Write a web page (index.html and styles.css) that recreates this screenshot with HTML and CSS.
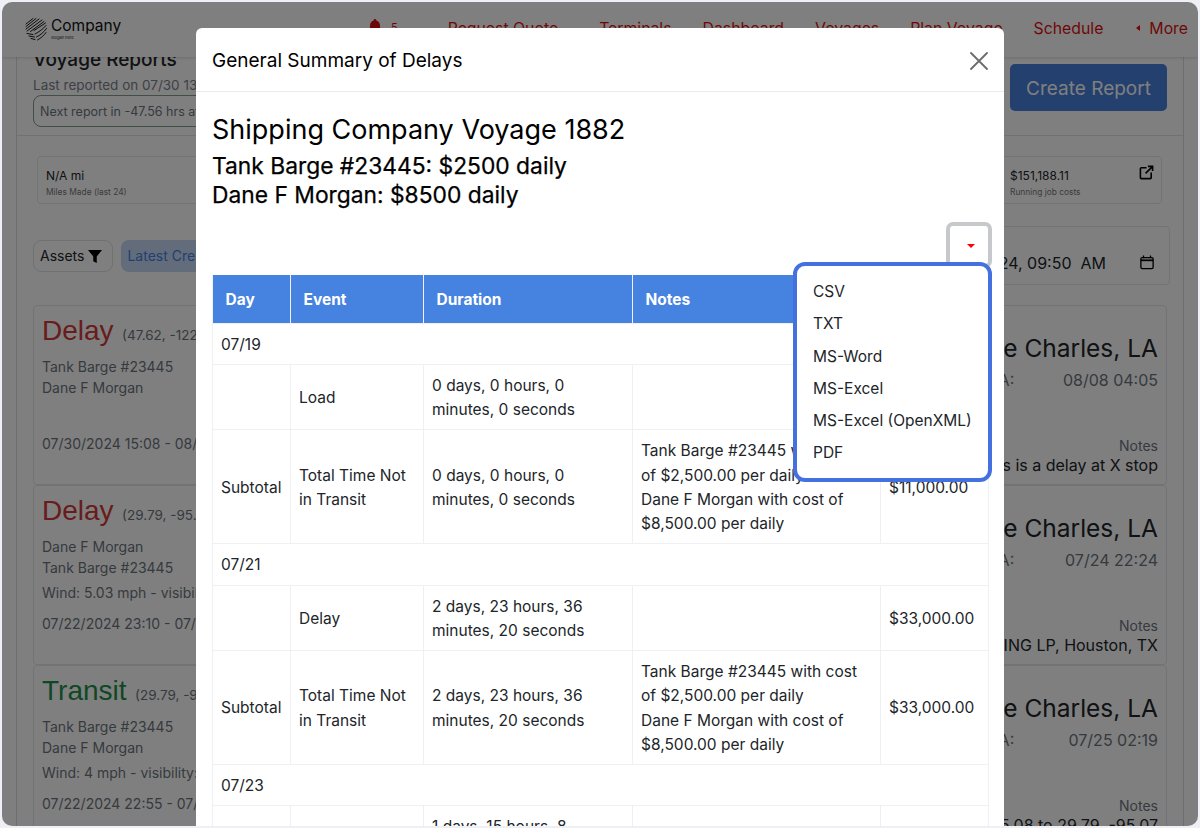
FILE: index.html
```html
<!DOCTYPE html>
<html lang="en">
<head>
<meta charset="utf-8">
<title>General Summary of Delays</title>
<link rel="stylesheet" href="styles.css">
</head>
<body>
<div class="frame">
  <div class="page">
    <div class="head-row">
      <div class="head-left">
        <h2 class="page-title">Voyage Reports</h2>
        <div class="last">Last reported on 07/30 13:42</div>
        <div class="pill">Next report in -47.56 hrs at 07/30 13:42 from last report</div>
      </div>
      <button class="create">Create Report</button>
    </div>
    <div class="stats">
      <div class="stat"><div class="stat-v">N/A mi</div><div class="stat-l">Miles Made (last 24)</div></div>
      <div class="stat stat-r">
        <div><div class="stat-v">$151,188.11</div><div class="stat-l">Running job costs</div></div>
        <svg class="ext" viewBox="0 0 16 16" width="15" height="15" fill="none" stroke="#000" stroke-width="1.700"><path d="M8 3H2.500A1 1 0 0 0 1.500 4v9.500a1 1 0 0 0 1 1H12a1 1 0 0 0 1-1V8"/><path d="M9.500 1.500H14.500V6.500M14.500 1.500L7 9"/></svg>
      </div>
    </div>
    <div class="filters">
      <div class="filter-left">
        <button class="assets">Assets <svg viewBox="0 0 16 16" width="14" height="14"><path d="M0 1h16L10 8.500V16l-4-2V8.500z"/></svg></button>
        <button class="latest">Latest Created</button>
      </div>
      <div class="date">
        <span>07/30/2024, 09:50&nbsp; AM</span>
        <svg viewBox="0 0 16 16" width="14" height="15" fill="none" stroke="#000" stroke-width="1.500"><rect x="1" y="2.500" width="14" height="12.500" rx="1.500"/><path d="M1 5.500h14" stroke-width="2"/><path d="M4 0v3M12 0v3"/></svg>
      </div>
    </div>
    <div class="reports">
      <article class="report">
        <div class="r-left">
          <div class="r-title"><span class="st st-red">Delay</span> <span class="coord">(47.62, -122.35)</span></div>
          <div class="r-line">Tank Barge #23445</div>
          <div class="r-line">Dane F Morgan</div>
          <div class="r-line r-extra"></div>
          <div class="r-line r-date">07/30/2024 15:08 - 08/08/2024 04:05</div>
        </div>
        <div class="r-right">
          <div class="r-dest">Lake Charles, LA</div>
          <div class="r-eta"><span>ETA:</span><span>08/08 04:05</span></div>
          <div class="r-notes">Notes</div>
          <div class="r-note">This is a delay at X stop</div>
        </div>
      </article>
      <article class="report">
        <div class="r-left">
          <div class="r-title"><span class="st st-red">Delay</span> <span class="coord">(29.79, -95.07)</span></div>
          <div class="r-line">Dane F Morgan</div>
          <div class="r-line">Tank Barge #23445</div>
          <div class="r-line r-extra">Wind: 5.03 mph - visibility: 10 mi</div>
          <div class="r-line r-date">07/22/2024 23:10 - 07/24/2024 22:24</div>
        </div>
        <div class="r-right">
          <div class="r-dest">Lake Charles, LA</div>
          <div class="r-eta"><span>ETA:</span><span>07/24 22:24</span></div>
          <div class="r-notes">Notes</div>
          <div class="r-note">KIRBY FLEETING LP, Houston, TX</div>
        </div>
      </article>
      <article class="report">
        <div class="r-left">
          <div class="r-title"><span class="st st-green">Transit</span> <span class="coord">(29.79, -95.07)</span></div>
          <div class="r-line">Tank Barge #23445</div>
          <div class="r-line">Dane F Morgan</div>
          <div class="r-line r-extra">Wind: 4 mph - visibility: 10 mi</div>
          <div class="r-line r-date">07/22/2024 22:55 - 07/25/2024 02:19</div>
        </div>
        <div class="r-right">
          <div class="r-dest">Lake Charles, LA</div>
          <div class="r-eta"><span>ETA:</span><span>07/25 02:19</span></div>
          <div class="r-notes">Notes</div>
          <div class="r-note">29.75, -95.08 to 29.79, -95.07</div>
        </div>
      </article>
    </div>
  </div>

  <nav class="nav">
    <div class="brand">
      <svg class="logo" viewBox="0 0 22 24" width="22" height="24" fill="none" stroke="#000" stroke-width=".9" stroke-linecap="round">
        <path d="M1 7L8 1.500M1 9.500L11 1.500M1 12L14 2M2 14L17 3M5.500 14.500L19 4.500M9 13.500L20.500 6"/>
        <path d="M2 16.500L8 17.500M4 19L9.500 20M6 21.500L10 22.500"/>
        <path d="M10 17C14 15 18 12 21 8.500M11.500 20C15 18.500 19 15 21.500 11.500M12.500 23C16 21 19 18.500 21 15.500"/>
      </svg>
      <div class="brand-text"><div class="brand-name">Company</div><div class="brand-slogan">Slogan here</div></div>
    </div>
    <div class="nav-links">
      <span class="bell-wrap"><svg viewBox="0 0 14 16" width="14" height="16" fill="#d11"><path d="M7 0a1.300 1.300 0 0 1 1.300 1.500C11 2 12 4.500 12 7c0 3 1 4 2 5v1H0v-1c1-1 2-2 2-5 0-2.500 1-5 3.700-5.500A1.300 1.300 0 0 1 7 0zM5 14h4a2 2 0 0 1-4 0z"/></svg><span class="badge">5</span></span>
      <a class="nl nl-first">Request Quote</a>
      <a class="nl">Terminals</a>
      <a class="nl">Dashboard</a>
      <a class="nl">Voyages</a>
      <a class="nl">Plan Voyage</a>
      <a class="nl">Schedule</a>
      <a class="nl more"><i class="caret-left"></i>More</a>
    </div>
  </nav>

  <div class="backdrop"></div>

  <section class="modal">
    <header class="modal-head">
      <h5 class="modal-title">General Summary of Delays</h5>
      <svg class="close" viewBox="0 0 18 18" width="18" height="18" stroke="#6b6b6b" stroke-width="1.800" stroke-linecap="round"><path d="M1 1l16 16M17 1L1 17"/></svg>
    </header>
    <div class="modal-body">
      <h3 class="voy">Shipping Company Voyage 1882</h3>
      <h4 class="rate">Tank Barge #23445: $2500 daily</h4>
      <h4 class="rate">Dane F Morgan: $8500 daily</h4>
      <div class="tools">
        <button class="toggle"><i class="caret-down"></i></button>
        <ul class="menu">
          <li>CSV</li><li>TXT</li><li>MS-Word</li><li>MS-Excel</li><li>MS-Excel (OpenXML)</li><li>PDF</li>
        </ul>
      </div>
      <table class="sum">
        <colgroup><col class="c1"><col class="c2"><col class="c3"><col class="c4"><col class="c5"></colgroup>
        <thead><tr><th>Day</th><th>Event</th><th>Duration</th><th>Notes</th><th>Cost</th></tr></thead>
        <tbody>
          <tr><td colspan="5">07/19</td></tr>
          <tr><td></td><td>Load</td><td>0 days, 0 hours, 0 minutes, 0 seconds</td><td></td><td>$11,000.00</td></tr>
          <tr><td>Subtotal</td><td>Total Time Not in Transit</td><td>0 days, 0 hours, 0 minutes, 0 seconds</td><td>Tank Barge #23445 with cost of $2,500.00 per daily<br>Dane F Morgan with cost of $8,500.00 per daily</td><td>$11,000.00</td></tr>
          <tr><td colspan="5">07/21</td></tr>
          <tr><td></td><td>Delay</td><td>2 days, 23 hours, 36 minutes, 20 seconds</td><td></td><td>$33,000.00</td></tr>
          <tr><td>Subtotal</td><td>Total Time Not in Transit</td><td>2 days, 23 hours, 36 minutes, 20 seconds</td><td>Tank Barge #23445 with cost of $2,500.00 per daily<br>Dane F Morgan with cost of $8,500.00 per daily</td><td>$33,000.00</td></tr>
          <tr><td colspan="5">07/23</td></tr>
          <tr><td></td><td>Delay</td><td>1 days, 15 hours, 8 minutes, 12 seconds</td><td></td><td>$22,000.00</td></tr>
        </tbody>
      </table>
    </div>
  </section>
</div>
</body>
</html>
```
FILE: styles.css
```css
* { box-sizing: border-box; }
html, body { margin: 0; height: 100%; }
body { background: #eef0f6; padding: 2px; font-family: Inter, "Liberation Sans", sans-serif; color: #212529; overflow: hidden; }
button { font: inherit; }
h2, h3, h4, h5, ul { margin: 0; padding: 0; font-weight: 400; }

.frame { position: relative; width: 1196px; height: 824px; border-radius: 10px; overflow: hidden; background: #fff; }

/* page behind the dialog */
.page { margin: 0 14px; height: 100%; padding: 46px 16px 0; border: solid #dcdcdc; border-width: 0 1px; }
.head-row { display: flex; justify-content: space-between; align-items: flex-start; height: 88px; margin: 0 -16px; padding: 0 16px; border-bottom: 1px solid #dee2e6; }
.page-title { font-size: 19px; line-height: 24px; font-weight: 500; }
.last { font-size: 13.500px; line-height: 18px; color: #7a838b; margin-top: 4px; white-space: nowrap; }
.pill { margin-top: 1px; height: 32px; width: 400px; border: 1px solid #80a08c; border-radius: 8px; padding: 0 6px; font-size: 12.500px; line-height: 32px; color: #6c757d; white-space: nowrap; overflow: hidden; }
.create { margin-top: 16px; padding-top: 2px; width: 157px; height: 47px; border: 0; border-radius: 5px; background: #4680dd; color: #fff; font-size: 19px; }

.stats { display: flex; justify-content: space-between; padding: 20px 5px 0 4px; }
.stat { width: 300px; height: 48px; border: 1px solid #e3e6ea; border-radius: 4px; padding: 11px 8px; }
.stat-v { font-size: 12px; line-height: 16px; }
.stat-l { font-size: 8.400px; line-height: 16px; color: #777; white-space: nowrap; }
.stat-r { width: 161px; display: flex; justify-content: space-between; align-items: flex-start; padding-right: 7px; }
.ext { margin-top: -3px; }

.filters { display: flex; justify-content: space-between; align-items: center; margin-top: 22px; height: 59px; }
.filter-left { display: flex; gap: 8px; }
.assets { display: flex; align-items: center; gap: 4px; height: 32px; padding: 0 10px 0 6px; background: #fff; border: 1px solid #dee2e6; border-radius: 8px; font-size: 14px; color: #212529; }
.latest { height: 32px; width: 200px; padding: 0 6px; text-align: left; background: #c5d9f6; border: 0; border-radius: 8px; font-size: 14px; color: #4680dd; }
.date { display: flex; align-items: center; justify-content: flex-end; gap: 34px; width: 300px; height: 59px; padding: 14px 15px 0; border: 1px solid #e3e6ea; border-radius: 4px; font-size: 16px; margin-right: -3px; }

.reports { margin-top: 20px; }
.report { display: flex; justify-content: space-between; height: 180px; padding: 4px 8px 0; border: 1px solid #e3e6ea; border-radius: 4px; }
.r-title { line-height: 41px; white-space: nowrap; }
.st { font-size: 28px; font-family: "Liberation Sans", sans-serif; }
.st-red { color: #d03838; }
.st-green { color: #1f9048; }
.coord { font-size: 13.500px; color: #6c757d; margin-left: 4px; }
.r-line { font-size: 14px; line-height: 21px; color: #6c757d; white-space: nowrap; }
.r-extra { min-height: 21px; margin-top: 4px; }
.r-date { margin-top: 10px; }
.r-right { width: 178px; display: flex; flex-direction: column; align-items: flex-end; padding-top: 20px; }
.r-dest { font-size: 24.500px; line-height: 37px; white-space: nowrap; }
.r-eta { align-self: stretch; display: flex; justify-content: space-between; font-size: 16px; line-height: 26px; color: #6c757d; }
.r-notes { margin-top: 43px; font-size: 14px; line-height: 20px; color: #6c757d; }
.r-note { font-size: 16px; line-height: 18px; white-space: nowrap; }

/* top bar */
.nav { position: absolute; left: 0; top: 0; right: 0; height: 55px; display: flex; justify-content: space-between; align-items: center; padding: 0 10px 0 23px; background: #fff; box-shadow: 0 1px 3px rgba(0,0,0,.15); }
.brand { display: flex; align-items: center; gap: 4px; margin-top: -2px; }
.brand-name { font-size: 15.500px; line-height: 18px; color: #111; }
.brand-slogan { font-size: 4px; line-height: 5px; }
.nav-links { display: flex; align-items: center; gap: 31px; font-size: 15.800px; color: #d11; margin-top: -3px; }
.bell-wrap { display: flex; align-items: center; gap: 9px; margin-right: 19px; margin-top: -2px; }
.nl-first { margin-right: 10px; }
.badge { font-size: 11px; }
.more { display: flex; align-items: center; gap: 9px; margin-left: 2px; }
.caret-left { border: 3.500px solid transparent; border-right: 4px solid #d11; border-left: 0; }

/* dialog */
.backdrop { position: absolute; inset: 0; background: rgba(0,0,0,.5); }
.modal { position: absolute; left: 194px; top: 26px; width: 808px; height: 900px; background: #fff; border-radius: 6px; color: #000; }
.modal-head { display: flex; justify-content: space-between; align-items: center; height: 64px; padding: 2px 16px 0; border-bottom: 1px solid #e9ecef; }
.modal-title { font-size: 19px; line-height: 24px; }
.modal-body { padding: 20px 16px 0; }
.voy { font-size: 27px; line-height: 43px; margin-top: -4px; }
.rate { font-size: 22.800px; line-height: 29px; -webkit-text-stroke: .25px #000; }
.tools { position: relative; height: 66px; }
.toggle { position: absolute; right: -4px; top: 13px; width: 46px; height: 46px; padding: 18px 0 0 4px; background: #fff; border: 4px solid #c6c8cb; border-radius: 7px; display: flex; align-items: flex-start; justify-content: center; }
.caret-down { border: 4px solid transparent; border-top: 4px solid #f00; border-bottom: 0; }
.menu { position: absolute; z-index: 2; right: -4px; top: 53px; width: 199px; height: 220px; padding: 10px 0 0 16px; list-style: none; background: #fff; border: 4px solid #4571e0; border-radius: 12px; font-size: 15.500px; line-height: 32.300px; color: #212529; }

.sum { width: 776px; table-layout: fixed; border-collapse: collapse; font-size: 15.500px; line-height: 24.250px; color: #212529; }
.c1 { width: 78px; } .c2 { width: 133px; } .c3 { width: 209px; } .c4 { width: 248px; } .c5 { width: 108px; }
.sum th { height: 48px; padding: 2px 13px 0 12.500px; text-align: left; font-weight: 700; background: #4682e0; color: #fff; border: 1px solid #f0f1f3; border-width: 0 1px; }
.sum td { padding: 9px 8px 7px; border: 1px solid #eef0f3; }
```
